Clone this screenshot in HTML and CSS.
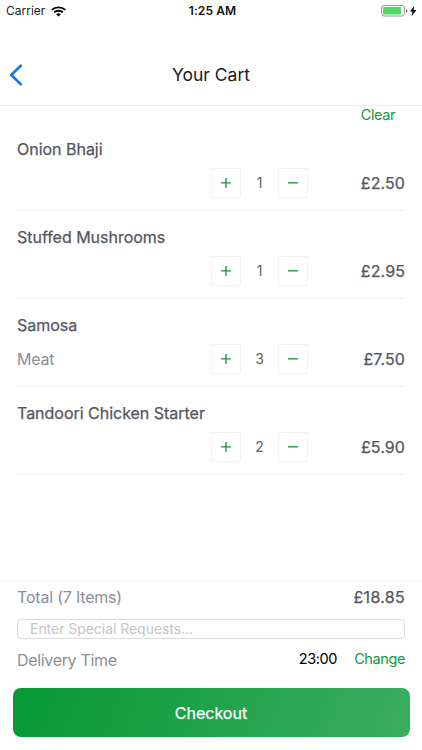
FILE: index.html
```html
<!DOCTYPE html>
<html lang="en">
<head>
<meta charset="utf-8">
<title>Your Cart</title>
<link rel="stylesheet" href="styles.css">
</head>
<body>
<div class="status">
  <div class="carrier"><span>Carrier</span>
    <svg width="15" height="11" viewBox="0 0 14 11" preserveAspectRatio="none"><g fill="none" stroke="#000" stroke-width="1.900"><path d="M.7 3.900a9 9 0 0 1 12.600 0"/><path d="M3 6.400a5.700 5.700 0 0 1 8 0"/></g><path d="M7 10.600 4.800 8.400a3.100 3.100 0 0 1 4.400 0z"/></svg>
  </div>
  <div class="clock">1:25 AM</div>
  <div class="power">
    <svg width="36" height="12" viewBox="0 0 36 12"><rect x=".5" y=".5" width="23" height="10.500" rx="2.500" fill="#fff" stroke="#999"/><rect x="2" y="2" width="18" height="7.500" rx=".8" fill="#4cd964"/><path d="M25 4v4q1.500-.6 1.500-2T25 4z" fill="#777"/><path d="M33.300.8 28.900 6.500h2.700L30.500 11.300l4.900-6.200h-2.900z"/></svg>
  </div>
</div>
<header class="nav">
  <svg class="back" width="14" height="22" viewBox="0 0 14 22"><path d="M11.800 1.700 2.200 11l9.600 9.300" fill="none" stroke="#1578ef" stroke-width="2.600" stroke-linecap="round" stroke-linejoin="round"/></svg>
  <h1>Your Cart</h1>
</header>
<main class="cart">
  <div class="clear"><a>Clear</a></div>
  <section class="item"><h2>Onion Bhaji</h2><div class="line"><span class="option"></span><button class="step"><svg width="10" height="10" viewBox="0 0 10 10"><path d="M0 4.800h10M5 0v10"/></svg></button><span class="qty">1</span><button class="step"><svg width="10" height="10" viewBox="0 0 10 10"><path d="M0 4.800h10"/></svg></button><span class="price">£2.50</span></div></section>
  <section class="item"><h2>Stuffed Mushrooms</h2><div class="line"><span class="option"></span><button class="step"><svg width="10" height="10" viewBox="0 0 10 10"><path d="M0 4.800h10M5 0v10"/></svg></button><span class="qty">1</span><button class="step"><svg width="10" height="10" viewBox="0 0 10 10"><path d="M0 4.800h10"/></svg></button><span class="price">£2.95</span></div></section>
  <section class="item"><h2>Samosa</h2><div class="line"><span class="option">Meat</span><button class="step"><svg width="10" height="10" viewBox="0 0 10 10"><path d="M0 4.800h10M5 0v10"/></svg></button><span class="qty">3</span><button class="step"><svg width="10" height="10" viewBox="0 0 10 10"><path d="M0 4.800h10"/></svg></button><span class="price">£7.50</span></div></section>
  <section class="item"><h2>Tandoori Chicken Starter</h2><div class="line"><span class="option"></span><button class="step"><svg width="10" height="10" viewBox="0 0 10 10"><path d="M0 4.800h10M5 0v10"/></svg></button><span class="qty">2</span><button class="step"><svg width="10" height="10" viewBox="0 0 10 10"><path d="M0 4.800h10"/></svg></button><span class="price">£5.90</span></div></section>
</main>
<footer class="summary">
  <div class="total"><span class="label">Total (7 Items)</span><span class="sum">£18.85</span></div>
  <div class="request">Enter Special Requests...</div>
  <div class="delivery"><span class="label">Delivery Time</span><span class="time">23:00</span><a class="change">Change</a></div>
  <button class="checkout">Checkout</button>
</footer>
</body>
</html>
```
FILE: styles.css
```css
* { box-sizing: border-box; }
body {
  margin: 0;
  width: 422px;
  height: 750px;
  display: flex;
  flex-direction: column;
  overflow: hidden;
  background: #fff;
  font-family: Inter, "Liberation Sans", sans-serif;
  color: #1a1a1a;
}
h1, h2 { margin: 0; }
svg { display: block; }
button { font: inherit; padding: 0; }
a { color: #159939; }

.status {
  height: 22px;
  display: grid;
  grid-template-columns: 1fr auto 1fr;
  align-items: center;
  padding: 0 5px 0 6px;
  font-size: 12px;
  line-height: 22px;
}
.carrier { display: flex; align-items: center; gap: 6px; }
.clock { padding-left: 2px; font-weight: 600; color: #111; letter-spacing: .1px; }
.power { display: flex; justify-content: flex-end; }

.nav {
  height: 84px;
  display: grid;
  grid-template-columns: 40px 1fr 40px;
  align-items: center;
  padding-top: 22px;
  border-bottom: 1px solid #efeff1;
}
.back { margin-left: 9px; }
.nav h1 { text-align: center; font-size: 17.5px; font-weight: 400; }

.cart { flex: 1; padding: 0 17px; }
.clear { height: 17px; padding-right: 10px; text-align: right; font-size: 14.5px; line-height: 18px; letter-spacing: -.4px; }
.item {
  height: 88px;
  padding-top: 15px;
  border-bottom: 1px solid #f1f1f3;
}
.item h2, .price, .sum { font-weight: 400; -webkit-text-stroke: .25px currentColor; color: #54565d; }
.item h2 { font-size: 16px; line-height: 22px; letter-spacing: -.02px; }
.line {
  display: grid;
  grid-template-columns: 194px 30px 37px 31px 1fr;
  align-items: center;
  margin-top: 7px;
  height: 32px;
}
.option { font-size: 16px; letter-spacing: -.25px; color: #8b8e97; }
.step {
  width: 30px;
  height: 30px;
  display: grid;
  place-items: center;
  border: 1px solid #f1f2f3;
  border-radius: 1px;
  background: #fff;
}
.step svg { stroke: #159939; stroke-width: 1.35; }
.qty { text-align: center; font-size: 14px; line-height: 20px; padding-bottom: 1px; color: #606269; }
.price { text-align: right; font-size: 16px; letter-spacing: .1px; }

.summary {
  height: 170px;
  padding: 0 17px;
  border-top: 1px solid #efeff1;
}
.total { display: flex; justify-content: space-between; height: 38px; line-height: 33px; font-size: 16px; }
.label { letter-spacing: -.2px; color: #8b8e97; }
.delivery .label { letter-spacing: -.33px; }
.sum { letter-spacing: .3px; }
.request {
  height: 20px;
  padding-left: 12px;
  border: 1px solid #d9dadc;
  border-radius: 4px;
  font-size: 14px;
  line-height: 18px;
  letter-spacing: -.04px;
  color: #c4c5ca;
}
.delivery { display: flex; height: 49px; line-height: 43px; font-size: 16px; }
.time { margin-left: auto; margin-right: 17px; font-size: 14.5px; line-height: 40px; letter-spacing: -.35px; color: #000; }
.change { font-size: 14.5px; line-height: 40px; letter-spacing: -.4px; }
.checkout {
  display: block;
  width: 397px;
  height: 49px;
  margin-left: -4.5px;
  border: 0;
  border-radius: 8px;
  background: linear-gradient(110deg, #069933, #3cad61);
  color: #fff;
  font-size: 16px;
  font-weight: 400;
  -webkit-text-stroke: .25px currentColor;
}
```
